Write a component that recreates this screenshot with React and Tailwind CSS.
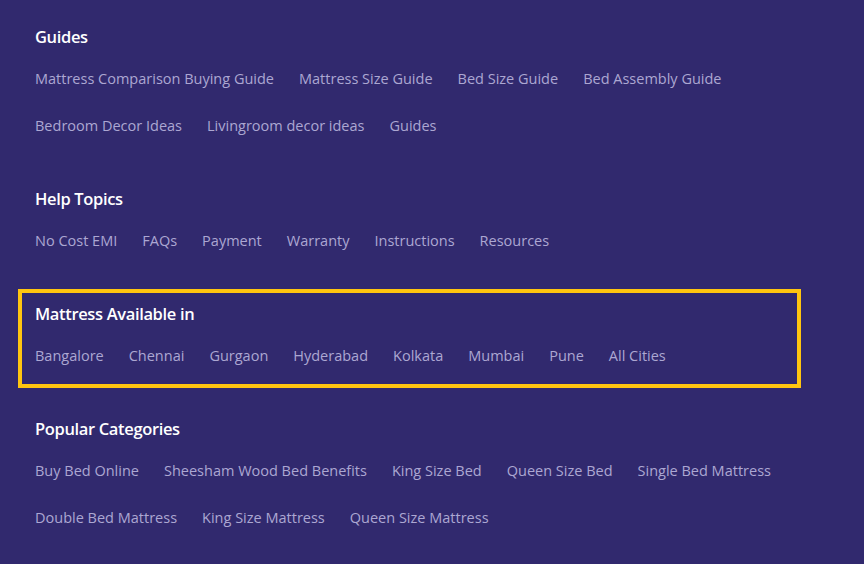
import React from "react";

const sections = [
  {
    title: "Guides",
    links: [
      "Mattress Comparison Buying Guide",
      "Mattress Size Guide",
      "Bed Size Guide",
      "Bed Assembly Guide",
      "Bedroom Decor Ideas",
      "Livingroom decor ideas",
      "Guides",
    ],
    rows: [4, 3],
  },
  {
    title: "Help Topics",
    links: ["No Cost EMI", "FAQs", "Payment", "Warranty", "Instructions", "Resources"],
    rows: [6],
  },
  {
    title: "Mattress Available in",
    links: ["Bangalore", "Chennai", "Gurgaon", "Hyderabad", "Kolkata", "Mumbai", "Pune", "All Cities"],
    rows: [8],
    highlight: true,
  },
  {
    title: "Popular Categories",
    links: [
      "Buy Bed Online",
      "Sheesham Wood Bed Benefits",
      "King Size Bed",
      "Queen Size Bed",
      "Single Bed Mattress",
      "Double Bed Mattress",
      "King Size Mattress",
      "Queen Size Mattress",
    ],
    rows: [5, 3],
  },
];

const Section = ({ title, links, rows, highlight }) => {
  let start = 0;
  const grouped = rows.map((n) => {
    const g = links.slice(start, start + n);
    start += n;
    return g;
  });
  return (
    <div className="relative">
      {highlight && (
        <div className="absolute -left-[17px] -top-[13px] w-[783px] h-[99px] border-4 border-[#ffc510] pointer-events-none" />
      )}
      <h3 className="h-6 leading-6 text-[16.5px] font-semibold text-white tracking-[-0.35px]">{title}</h3>
      <div className="mt-[19px] flex flex-col gap-[25px]">
        {grouped.map((g, i) => (
          <div key={i} className="flex gap-[25px] h-[22px] items-center">
            {g.map((l) => (
              <a key={l} href="#" className="text-[14.5px] leading-[22px] text-[#aca7d2] whitespace-nowrap">
                {l}
              </a>
            ))}
          </div>
        ))}
      </div>
    </div>
  );
};

export default function App() {
  return (
    <div
      className="w-[864px] h-[564px] overflow-hidden bg-[#31296e] pl-[35px] pt-[25px]"
      style={{ fontFamily: '"Open Sans", sans-serif' }}
    >
      <div className="flex flex-col gap-[50px]">
        {sections.map((s) => (
          <Section key={s.title} {...s} />
        ))}
      </div>
    </div>
  );
}
